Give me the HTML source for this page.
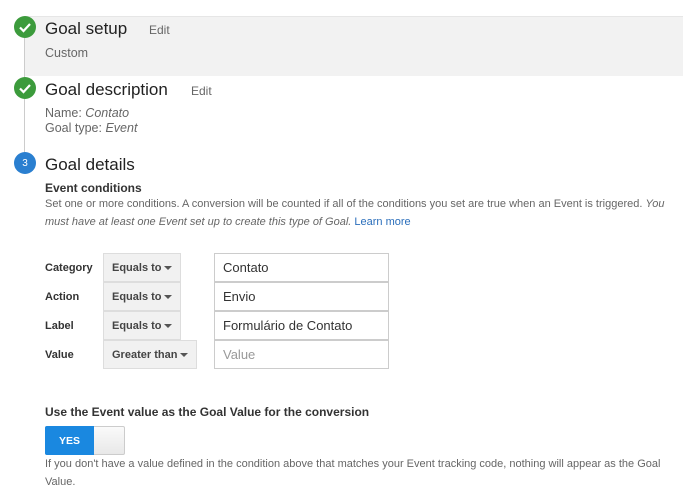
<!DOCTYPE html>
<html><head><meta charset="utf-8"><style>
body{margin:0;width:683px;height:498px;background:#fff;font-family:"Liberation Sans",Arial,sans-serif;color:#222;position:relative;overflow:hidden}
.a{position:absolute;white-space:nowrap}
.h{font-size:17px;color:#222}
.ed{font-size:12px;color:#666}
.s{font-size:12.5px;color:#666}
.c{position:absolute;width:22px;height:22px;border-radius:50%}
.g{background:#3c9b3c}
.lbl{font-size:11px;font-weight:bold;color:#333}
.dd{position:absolute;background:#f1f1f1;border:1px solid #ddd;font-size:11px;font-weight:bold;color:#444;box-sizing:border-box;height:29px;display:flex;align-items:center;padding-left:8px}
.ar{position:absolute;width:8px;height:4px}
.in{position:absolute;left:214px;width:175px;height:29px;border:1px solid #ccc;box-sizing:border-box;font-size:13px;display:flex;align-items:center;padding-left:8px;color:#333}
</style></head><body>
<div style="position:absolute;left:25px;top:16px;width:658px;height:59px;background:#f2f2f2;border-top:1px solid #e6e6e6"></div>
<div style="position:absolute;left:24px;top:27px;width:1px;height:136px;background:#ccc"></div>
<div class="c g" style="left:14px;top:16px"><svg width="22" height="22"><path d="M6 11.5l3.5 3.5 6.5-7" stroke="#fff" stroke-width="2.2" fill="none"/></svg></div>
<div class="c g" style="left:14px;top:77px"><svg width="22" height="22"><path d="M6 11.5l3.5 3.5 6.5-7" stroke="#fff" stroke-width="2.2" fill="none"/></svg></div>
<div class="c" style="left:14px;top:152px;background:#2a7fd0;color:#fff;font-size:10px;display:flex;align-items:center;justify-content:center">3</div>
<div class="a h" style="left:45px;top:19px">Goal setup</div>
<div class="a ed" style="left:149px;top:23px">Edit</div>
<div class="a s" style="left:45px;top:46px">Custom</div>
<div class="a h" style="left:45px;top:80px">Goal description</div>
<div class="a ed" style="left:191px;top:84px">Edit</div>
<div class="a s" style="left:45px;top:106px">Name: <i>Contato</i></div>
<div class="a s" style="left:45px;top:121px">Goal type: <i>Event</i></div>
<div class="a h" style="left:45px;top:155px">Goal details</div>
<div class="a" style="left:45px;top:181px;font-size:12px;font-weight:bold;color:#333">Event conditions</div>
<div class="a" style="left:45px;top:195px;font-size:11px;color:#666;line-height:18px">Set one or more conditions. A conversion will be counted if all of the conditions you set are true when an Event is triggered. <i>You</i><br><i>must have at least one Event set up to create this type of Goal.</i> <span style="color:#2a6ebb">Learn more</span></div>
<div class="a lbl" style="left:45px;top:262px">Category</div>
<div class="a lbl" style="left:45px;top:291px">Action</div>
<div class="a lbl" style="left:45px;top:320px">Label</div>
<div class="a lbl" style="left:45px;top:349px">Value</div>
<div class="dd" style="left:103px;top:253px;width:78px">Equals to</div>
<div class="dd" style="left:103px;top:282px;width:78px">Equals to</div>
<div class="dd" style="left:103px;top:311px;width:78px">Equals to</div>
<div class="dd" style="left:103px;top:340px;width:94px">Greater than</div>
<svg class="ar" style="left:164px;top:266px"><path d="M0 0h8l-4 4z" fill="#555"/></svg>
<svg class="ar" style="left:164px;top:295px"><path d="M0 0h8l-4 4z" fill="#555"/></svg>
<svg class="ar" style="left:164px;top:324px"><path d="M0 0h8l-4 4z" fill="#555"/></svg>
<svg class="ar" style="left:180px;top:353px"><path d="M0 0h8l-4 4z" fill="#555"/></svg>
<div class="in" style="top:253px">Contato</div>
<div class="in" style="top:282px">Envio</div>
<div class="in" style="top:311px">Formulário de Contato</div>
<div class="in" style="top:340px;color:#999">Value</div>
<div class="a" style="left:45px;top:405px;font-size:12px;font-weight:bold;color:#333">Use the Event value as the Goal Value for the conversion</div>
<div style="position:absolute;left:45px;top:426px;width:80px;height:29px;border:1px solid #ccc;box-sizing:border-box;border-radius:2px;background:linear-gradient(#fafafa,#e8e8e8)"></div>
<div style="position:absolute;left:45px;top:426px;width:49px;height:29px;background:#1a88e0;border-radius:2px 0 0 2px;color:#fff;font-size:10.5px;font-weight:bold;display:flex;align-items:center;justify-content:center">YES</div>
<div class="a" style="left:45px;top:455px;font-size:11px;color:#666;line-height:18px">If you don't have a value defined in the condition above that matches your Event tracking code, nothing will appear as the Goal<br>Value.</div>
</body></html>
